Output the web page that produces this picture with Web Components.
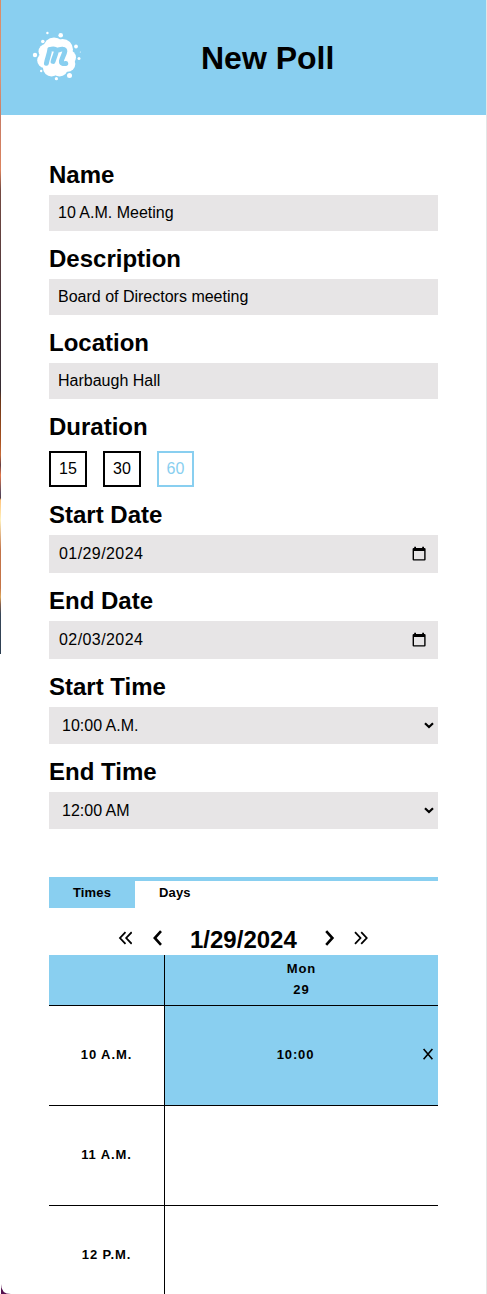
<!DOCTYPE html>
<html lang="en"><head><meta charset="utf-8"><title>New Poll</title>
<style>html,body{margin:0;height:1294px;overflow:hidden;background:#fff}body{font-family:"Liberation Sans",Arial,sans-serif;color:#000}</style></head>
<body><poll-page></poll-page>
<script>
const define = (name, html, init) => customElements.define(name, class extends HTMLElement {
  constructor() {
    super();
    const t = document.createElement('template');
    t.innerHTML = html;
    this.attachShadow({mode: 'open'}).append(t.content.cloneNode(true));
  }
  connectedCallback() { if (init) init(this); }
});

define('meet-logo', `<style>:host{display:block;width:50px;height:50px}svg{display:block}</style>
<svg width="50" height="50" viewBox="0 0 50 50"><g fill="#fff">
<circle cx="23" cy="17" r="10.500"/><circle cx="31.500" cy="18.500" r="10.500"/><circle cx="15" cy="20.500" r="7.500"/><circle cx="13.700" cy="29.500" r="7.500"/><circle cx="20.500" cy="37" r="8.500"/><circle cx="28.500" cy="37" r="8.500"/><circle cx="36.500" cy="33" r="7.800"/><circle cx="37.500" cy="26.500" r="7.500"/><circle cx="25" cy="26" r="15"/>
<circle cx="29.700" cy="4.300" r="2.300"/><circle cx="16.400" cy="2" r="1.200"/><circle cx="11.800" cy="10.500" r="1.800"/><circle cx="4" cy="24" r="2.200"/><circle cx="10.200" cy="40" r="1.200"/><circle cx="25.400" cy="47.700" r="1.600"/><circle cx="38.500" cy="44.500" r="2.500"/><circle cx="48" cy="27.500" r="1.500"/><circle cx="45" cy="15.500" r="1.900"/><circle cx="49.300" cy="21" r=".5"/></g>
<path d="M18.800 18.500C18.100 24 16.300 27 15.400 32.300M18.800 18.500C21.300 18.200 22.300 17.500 24.500 18.500C26.800 19.600 23.500 25 22.100 30.500M24.800 19.500C27.300 19.800 28.600 17.800 31.800 18.200C36.800 18.500 31.300 25 30.400 30C30.100 32.400 32 33 34.800 32.500" fill="none" stroke="#89cff0" stroke-width="4.900" stroke-linecap="round" stroke-linejoin="round"/></svg>`);

define('page-header', `<style>:host{display:flex;height:115px;background:#89cff0;align-items:flex-start}
meet-logo{margin:31px 0 0 30px;flex:none}h1{font-size:32px;line-height:36px;margin:40px 0 0 120px}</style><meet-logo></meet-logo><h1><slot></slot></h1>`);

define('form-field', `<style>:host{display:block;margin-bottom:14px}h2{margin:0;font-size:24px;line-height:28px;height:34px}</style><h2></h2><slot></slot>`,
 e => e.shadowRoot.querySelector('h2').textContent = e.getAttribute('label'));

define('text-box', `<style>:host{display:flex;align-items:center;box-sizing:border-box;height:36px;padding:0 9px;background:#e7e5e6;font-size:16px}</style><slot></slot>`);

define('date-box', `<style>:host{display:flex;align-items:center;justify-content:space-between;box-sizing:border-box;height:38px;padding:0 11px 0 10px;background:#e7e5e6;font-size:16px;letter-spacing:.42px}</style><span><slot></slot></span>
<svg width="16" height="16" viewBox="0 0 16 16"><path d="M3.200 .7H5V2H11.200V.7H13V2H13.500Q14.600 2 14.600 3V13.500Q14.600 14.600 13.500 14.600H2.700Q1.600 14.600 1.600 13.500V3Q1.600 2 2.700 2H3.200ZM3 5V13.200H13.200V5Z" fill-rule="evenodd"/></svg>`);

define('select-box', `<style>:host{display:flex;align-items:center;justify-content:space-between;box-sizing:border-box;height:37px;padding:0 4px 0 13px;background:#e7e5e6;font-size:16px}</style><span><slot></slot></span>
<svg width="10" height="7" viewBox="0 0 10 7"><path d="M1 1.200L5 5L9 1.200" fill="none" stroke="#000" stroke-width="2.200"/></svg>`);

define('duration-button', `<style>:host{display:flex;align-items:center;justify-content:center;box-sizing:border-box;width:38px;height:36px;border:2px solid;font-size:16px}:host([selected]){color:#89cff0;width:37px}</style><slot></slot>`);

define('button-row', `<style>:host{display:flex;gap:16px;padding-top:4px}</style><slot></slot>`);

define('calendar-tabs', `<style>:host{display:flex;height:31px;box-sizing:border-box;border-top:4px solid #89cff0;font:bold 13px/24px "Liberation Sans",Arial,sans-serif;letter-spacing:.15px}
span{padding:0 24px;box-sizing:border-box;height:27px}.on{background:#89cff0;width:86px}</style><span class="on">Times</span><span>Days</span>`);

define('date-nav', `<style>:host{display:flex;height:47px;box-sizing:border-box;padding:18px 0 0 69px}svg{flex:none;fill:none;stroke:#000}h2{font-size:24px;line-height:28px;margin:0 0 0 26px;width:107px;white-space:nowrap}</style>
<svg width="14" height="24" viewBox="0 0 14 24" stroke-width="1.800"><path d="M7.500 6.200L2 12L7.500 17.800M13.700 6.200L8.200 12L13.700 17.800"/></svg>
<svg width="12" height="24" viewBox="0 0 12 24" stroke-width="2.600" style="margin-left:20px"><path d="M9 5.200L2.800 12L9 18.800"/></svg>
<h2><slot></slot></h2>
<svg width="12" height="24" viewBox="0 0 12 24" stroke-width="2.600" style="margin-left:27px"><path d="M2.200 5.200L8.400 12L2.200 18.800"/></svg>
<svg width="14" height="24" viewBox="0 0 14 24" stroke-width="1.800" style="margin-left:18px"><path d="M1 6.200L6.500 12L1 17.800M7.200 6.200L12.700 12L7.200 17.800"/></svg>`);

define('schedule-grid', `<style>:host{display:grid;grid-template-columns:116px 273px;grid-template-rows:51px repeat(3,100px);font:bold 13px/21px "Liberation Sans",Arial,sans-serif;letter-spacing:.9px}
div{box-sizing:border-box;border-bottom:1px solid #000;padding-bottom:2px;display:flex;align-items:center;justify-content:center;text-align:center}
.hour{border-right:1px solid #000}.blue{background:#89cff0}
.slot{display:grid;grid-template-columns:1fr auto 1fr;padding:0 4px 2px 0}
.slot span{grid-column:2;margin-right:8px}.slot svg{grid-column:3;justify-self:end}</style>
<div class="hour blue"></div><div class="blue"><span>Mon<br>29</span></div>
<div class="hour">10 A.M.</div><div class="slot blue"><span>10:00</span><svg width="12" height="14" viewBox="0 0 12 14"><path d="M1.600 1L10.400 11.300M10.400 1L1.600 11.300" fill="none" stroke="#000" stroke-width="1.600"/></svg></div>
<div class="hour">11 A.M.</div><div></div><div class="hour">12 P.M.</div><div></div>`);

define('poll-page', `<style>:host{display:grid;grid-template-columns:1px 485px 1px;width:487px;height:1294px;overflow:hidden}
.photo{height:654px;background:linear-gradient(#d98c68 0,#d99478 75px,#c87c65 120px,#dc835e 170px,#754a42 190px,#49343a 300px,#352b32 390px,#6b3516 400px,#a7501f 440px,#c76b38 455px,#673e43 465px,#e5784a 475px,#594a60 493px,#573d48 498px,#ffc37a 500px,#fff1bd 520px,#c27348 550px,#c57446 588px,#dca85c 597px,#8c624c 604px,#374659 614px,#2c3e51 654px)}
.right{background:#e5e5e5}.sheet{min-width:0}main{display:block;padding:46px 48px 0}calendar-tabs{margin-top:48px}
.corner{position:absolute;left:1px;top:1284px}</style>
<div class="photo"></div><div class="sheet"><page-header>New Poll</page-header><main>
<form-field label="Name"><text-box>10 A.M. Meeting</text-box></form-field>
<form-field label="Description"><text-box>Board of Directors meeting</text-box></form-field>
<form-field label="Location"><text-box>Harbaugh Hall</text-box></form-field>
<form-field label="Duration"><button-row><duration-button>15</duration-button><duration-button>30</duration-button><duration-button selected>60</duration-button></button-row></form-field>
<form-field label="Start Date"><date-box>01/29/2024</date-box></form-field>
<form-field label="End Date"><date-box>02/03/2024</date-box></form-field>
<form-field label="Start Time"><select-box>10:00 A.M.</select-box></form-field>
<form-field label="End Time" style="margin-bottom:0"><select-box>12:00 AM</select-box></form-field>
<calendar-tabs></calendar-tabs><date-nav>1/29/2024</date-nav><schedule-grid></schedule-grid></main></div><div class="right"></div>
<svg class="corner" width="10" height="10"><path d="M0 0Q0 10 10 10H0Z" fill="#55104e"/></svg>`);
</script></body></html>
